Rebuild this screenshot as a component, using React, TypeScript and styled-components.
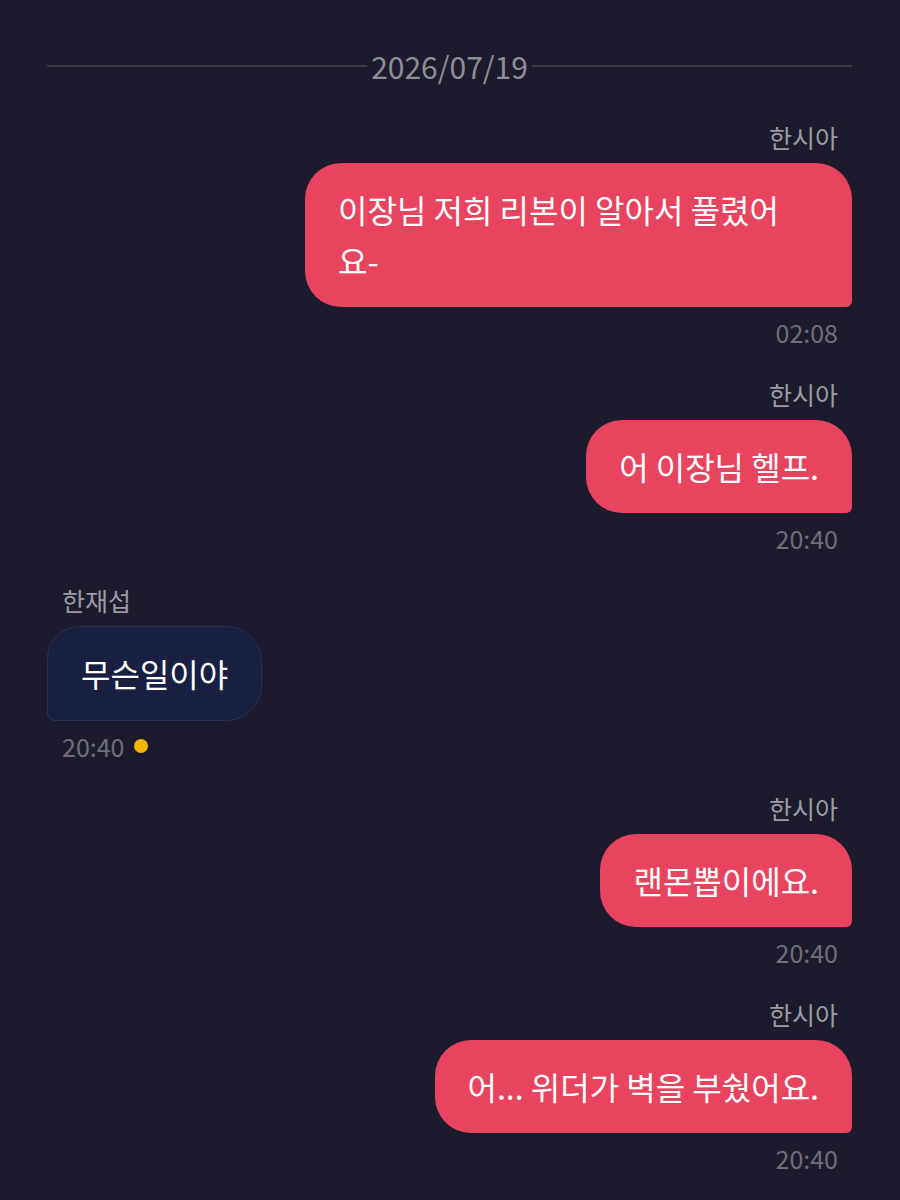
import React from 'react';
import styled, { createGlobalStyle } from 'styled-components';

const GlobalStyle = createGlobalStyle`
  html, body {
    margin: 0;
    padding: 0;
    background: #1b1b2d;
  }
  body {
    font-family: "Noto Sans CJK KR", "Noto Sans", sans-serif;
  }
`;

type Msg = {
  who: string;
  text: string;
  time: string;
  mine: boolean;
  unread?: boolean;
};

const messages: Msg[] = [
  { who: '한시아', text: '이장님 저희 리본이 알아서 풀렸어요-', time: '02:08', mine: true },
  { who: '한시아', text: '어 이장님 헬프.', time: '20:40', mine: true },
  { who: '한재섭', text: '무슨일이야', time: '20:40', mine: false, unread: true },
  { who: '한시아', text: '랜몬뽑이에요.', time: '20:40', mine: true },
  { who: '한시아', text: '어... 위더가 벽을 부쉈어요.', time: '20:40', mine: true },
];

function App() {
  return (
    <Page>
      <GlobalStyle />
      <DateRow>
        <Line />
        <DateText>2026/07/19</DateText>
        <Line />
      </DateRow>
      <Thread>
        {messages.map((m, i) => (
          <Group key={i} $mine={m.mine}>
            <Name>{m.who}</Name>
            <Bubble $mine={m.mine}>{m.text}</Bubble>
            <Meta>
              <span>{m.time}</span>
              {m.unread && <Dot />}
            </Meta>
          </Group>
        ))}
      </Thread>
    </Page>
  );
}

export default App;

const Page = styled.div`
  min-height: 1200px;
  box-sizing: border-box;
  padding: 46px 48px 0 47px;
  background: #1b1b2d;
`;

const DateRow = styled.div`
  display: flex;
  align-items: center;
  gap: 4px;
  height: 40px;
`;

const Line = styled.div`
  flex: 1;
  height: 2px;
  background: #3a3a45;
`;

const DateText = styled.span`
  font-size: 30px;
  line-height: 40px;
  color: #8e8e98;
`;

const Thread = styled.div`
  display: flex;
  flex-direction: column;
  gap: 32px;
  margin-top: 36px;
`;

const Group = styled.div<{ $mine: boolean }>`
  display: flex;
  flex-direction: column;
  align-items: ${(p) => (p.$mine ? 'flex-end' : 'flex-start')};
  gap: 10px;
`;

const Name = styled.div`
  font-size: 25px;
  line-height: 30px;
  color: #9c9ca4;
  padding: 0 14px 0 15px;
`;

const Bubble = styled.div<{ $mine: boolean }>`
  max-width: 547px;
  box-sizing: border-box;
  padding: ${(p) => (p.$mine ? '21px 33px' : '21px 33px')};
  font-size: 32px;
  line-height: 51px;
  color: #ffffff;
  margin-top: 1px;
  background: ${(p) => (p.$mine ? '#e8445f' : '#172040')};
  border: ${(p) => (p.$mine ? 'none' : '1px solid #2a3352')};
  border-radius: ${(p) => (p.$mine ? '36px 36px 6px 36px' : '32px 36px 36px 8px')};
`;

const Meta = styled.div`
  display: flex;
  align-items: center;
  gap: 10px;
  font-size: 25px;
  line-height: 30px;
  color: #6f6f7a;
  padding: 0 14px 0 15px;
`;

const Dot = styled.span`
  width: 14px;
  height: 14px;
  border-radius: 50%;
  background: #f6b300;
`;
